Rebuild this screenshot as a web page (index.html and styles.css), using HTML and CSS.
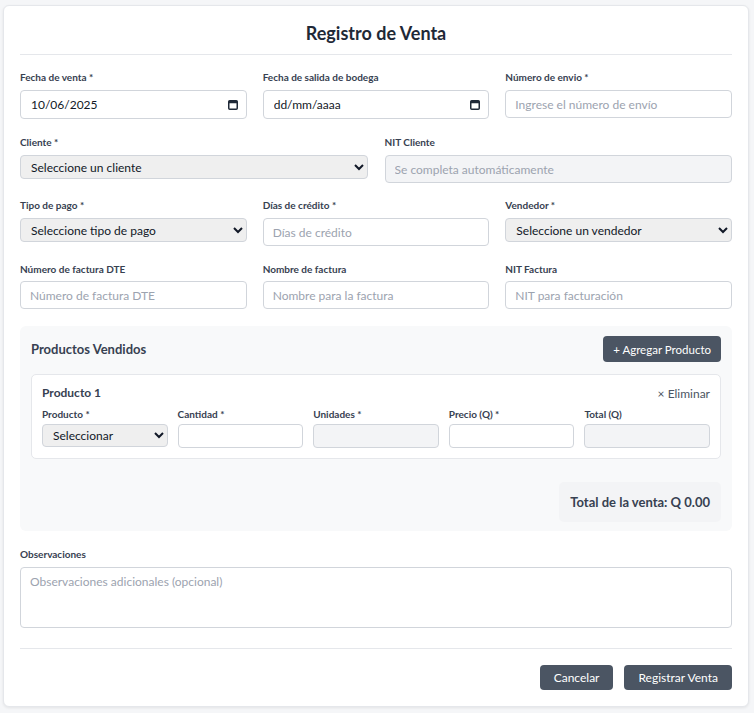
FILE: index.html
```html
<!DOCTYPE html>
<html lang="es">
<head>
<meta charset="utf-8">
<title>Registro de Venta</title>
<link rel="stylesheet" href="styles.css">
</head>
<body>
<div class="card">
  <h1 class="title">Registro de Venta</h1>

  <div class="grid3 r1">
    <div class="field">
      <label class="lbl">Fecha de venta *</label>
      <div class="date-wrap">
        <input class="inp date" type="text" value="10/06/2025">
        <svg class="cal" width="10" height="11" viewBox="0 0 10 11"><rect x="0.75" y="1.75" width="8.5" height="8.5" rx="1" fill="none" stroke="#1f2937" stroke-width="1.5"/><rect x="0.75" y="1.75" width="8.5" height="2.5" fill="#1f2937"/></svg>
      </div>
    </div>
    <div class="field">
      <label class="lbl">Fecha de salida de bodega</label>
      <div class="date-wrap">
        <input class="inp date" type="text" value="dd/mm/aaaa">
        <svg class="cal" width="10" height="11" viewBox="0 0 10 11"><rect x="0.75" y="1.75" width="8.5" height="8.5" rx="1" fill="none" stroke="#1f2937" stroke-width="1.5"/><rect x="0.75" y="1.75" width="8.5" height="2.5" fill="#1f2937"/></svg>
      </div>
    </div>
    <div class="field">
      <label class="lbl">Número de envio *</label>
      <input class="inp" type="text" placeholder="Ingrese el número de envío">
    </div>
  </div>

  <div class="grid2">
    <div class="field">
      <label class="lbl">Cliente *</label>
      <select class="sel"><option>Seleccione un cliente</option></select>
    </div>
    <div class="field">
      <label class="lbl">NIT Cliente</label>
      <input class="inp dis" type="text" placeholder="Se completa automáticamente" disabled>
    </div>
  </div>

  <div class="grid3 r3">
    <div class="field">
      <label class="lbl">Tipo de pago *</label>
      <select class="sel"><option>Seleccione tipo de pago</option></select>
    </div>
    <div class="field">
      <label class="lbl">Días de crédito *</label>
      <input class="inp" type="text" placeholder="Días de crédito">
    </div>
    <div class="field">
      <label class="lbl">Vendedor *</label>
      <select class="sel"><option>Seleccione un vendedor</option></select>
    </div>
  </div>

  <div class="grid3 r4">
    <div class="field">
      <label class="lbl">Número de factura DTE</label>
      <input class="inp" type="text" placeholder="Número de factura DTE">
    </div>
    <div class="field">
      <label class="lbl">Nombre de factura</label>
      <input class="inp" type="text" placeholder="Nombre para la factura">
    </div>
    <div class="field">
      <label class="lbl">NIT Factura</label>
      <input class="inp" type="text" placeholder="NIT para facturación">
    </div>
  </div>

  <section class="products">
    <div class="prod-head">
      <h2 class="prod-title">Productos Vendidos</h2>
      <button class="btn btn-sm">+ Agregar Producto</button>
    </div>
    <div class="item">
      <div class="item-head">
        <h3 class="item-title">Producto 1</h3>
        <span class="remove">× Eliminar</span>
      </div>
      <div class="grid5">
        <div class="field">
          <label class="lbl">Producto *</label>
          <select class="sel sel-sm"><option>Seleccionar</option></select>
        </div>
        <div class="field">
          <label class="lbl">Cantidad *</label>
          <input class="inp inp-sm" type="text">
        </div>
        <div class="field">
          <label class="lbl">Unidades *</label>
          <input class="inp inp-sm dis" type="text" disabled>
        </div>
        <div class="field">
          <label class="lbl">Precio (Q) *</label>
          <input class="inp inp-sm" type="text">
        </div>
        <div class="field">
          <label class="lbl">Total (Q)</label>
          <input class="inp inp-sm dis" type="text" disabled>
        </div>
      </div>
    </div>
    <div class="total-row">
      <div class="total">Total de la venta: Q 0.00</div>
    </div>
  </section>

  <div class="field obs">
    <label class="lbl">Observaciones</label>
    <textarea class="inp area" placeholder="Observaciones adicionales (opcional)"></textarea>
  </div>

  <div class="actions">
    <button class="btn">Cancelar</button>
    <button class="btn">Registrar Venta</button>
  </div>
</div>
</body>
</html>
```
FILE: styles.css
```css
* { box-sizing: border-box; }
html, body { margin: 0; }
body {
  background: #f5f6f8;
  padding: 5px 5px 6px 3px;
  font-family: Lato, "Open Sans", sans-serif;
  color: #374151;
}
.card {
  background: #fff;
  border: 1px solid #e5e7eb;
  border-radius: 6px;
  box-shadow: 0 1px 3px rgba(0,0,0,0.08);
  padding: 16px 16px 16px 16px;
}
.title {
  margin: 0;
  text-align: center;
  font-size: 18px;
  line-height: 22px;
  font-weight: 700;
  color: #1f2937;
  padding: 0 0 10px;
  border-bottom: 1px solid #e5e7eb;
  margin-bottom: 15px;
}
.grid3 {
  display: grid;
  grid-template-columns: repeat(3, 1fr);
  gap: 16px;
}
.r1 { margin-bottom: 16px; }
.r3 { margin-bottom: 16px; }
.r4 .lbl { margin-bottom: 5px; }
.grid2 {
  display: grid;
  grid-template-columns: 1fr 1fr;
  gap: 17px;
  margin-bottom: 15px;
}
.field { display: flex; flex-direction: column; min-width: 0; }
.lbl {
  font-size: 10px;
  line-height: 14px;
  font-weight: 700;
  color: #374151;
  margin-bottom: 6px;
}
.inp {
  font-family: inherit;
  font-size: 12px;
  height: 28px;
  width: 100%;
  border: 1px solid #d1d5db;
  border-radius: 4px;
  padding: 0 9px;
  color: #111827;
  background: #fff;
  outline: none;
}
.inp::placeholder { color: #9ca3af; }
.date { font-size: 12px; padding-left: 10px; height: 29px; }
.date-wrap { position: relative; }
.cal { position: absolute; right: 9px; top: 9px; }
.dis { background: #f3f4f6; }
.dis::placeholder { color: #9ca3af; }
.sel {
  font-family: inherit;
  font-size: 12px;
  height: 24px;
  width: 100%;
  border: 1px solid #d1d5db;
  border-radius: 4px;
  background-color: #efefef;
  color: #111827;
  padding: 0 6px;
}
.products {
  background: #f8f9fa;
  border-radius: 6px;
  padding: 10px 11px 9px;
  margin-top: 17px;
}
.prod-head {
  display: flex;
  justify-content: space-between;
  align-items: center;
  margin-bottom: 12px;
}
.prod-title {
  margin: 0;
  font-size: 13px;
  font-weight: 700;
  color: #374151;
}
.btn {
  font-family: inherit;
  background: #4b5563;
  color: #fff;
  border: none;
  border-radius: 4px;
  font-size: 12px;
  height: 25px;
  padding: 0 14px;
}
.btn-sm { height: 26px; padding: 0 10px; font-size: 11.5px; }
.item {
  background: #fff;
  border: 1px solid #e5e7eb;
  border-radius: 5px;
  padding: 10px 10px 10px 10px;
}
.item-head {
  display: flex;
  justify-content: space-between;
  align-items: center;
  margin-bottom: 6px;
}
.item-title {
  margin: 0;
  font-size: 12px;
  line-height: 16px;
  font-weight: 700;
  color: #374151;
}
.remove { font-size: 12px; color: #4b5563; }
.grid5 {
  display: grid;
  grid-template-columns: repeat(5, 1fr);
  gap: 10px;
}
.grid5 .lbl { margin-bottom: 3px; }
.sel-sm { height: 23px; }
.inp-sm { height: 24px; }
.total-row {
  display: flex;
  justify-content: flex-end;
  margin-top: 23px;
}
.total {
  background: #f3f4f6;
  border-radius: 5px;
  padding: 0 11px;
  height: 40px;
  line-height: 40px;
  font-size: 13px;
  font-weight: 700;
  color: #374151;
}
.obs { margin-top: 16px; }
.area {
  height: 61px;
  resize: none;
  padding: 6px 9px;
  display: block;
}
.actions {
  display: flex;
  justify-content: flex-end;
  gap: 11px;
  border-top: 1px solid #e5e7eb;
  margin-top: 20px;
  padding-top: 16px;
}
```
